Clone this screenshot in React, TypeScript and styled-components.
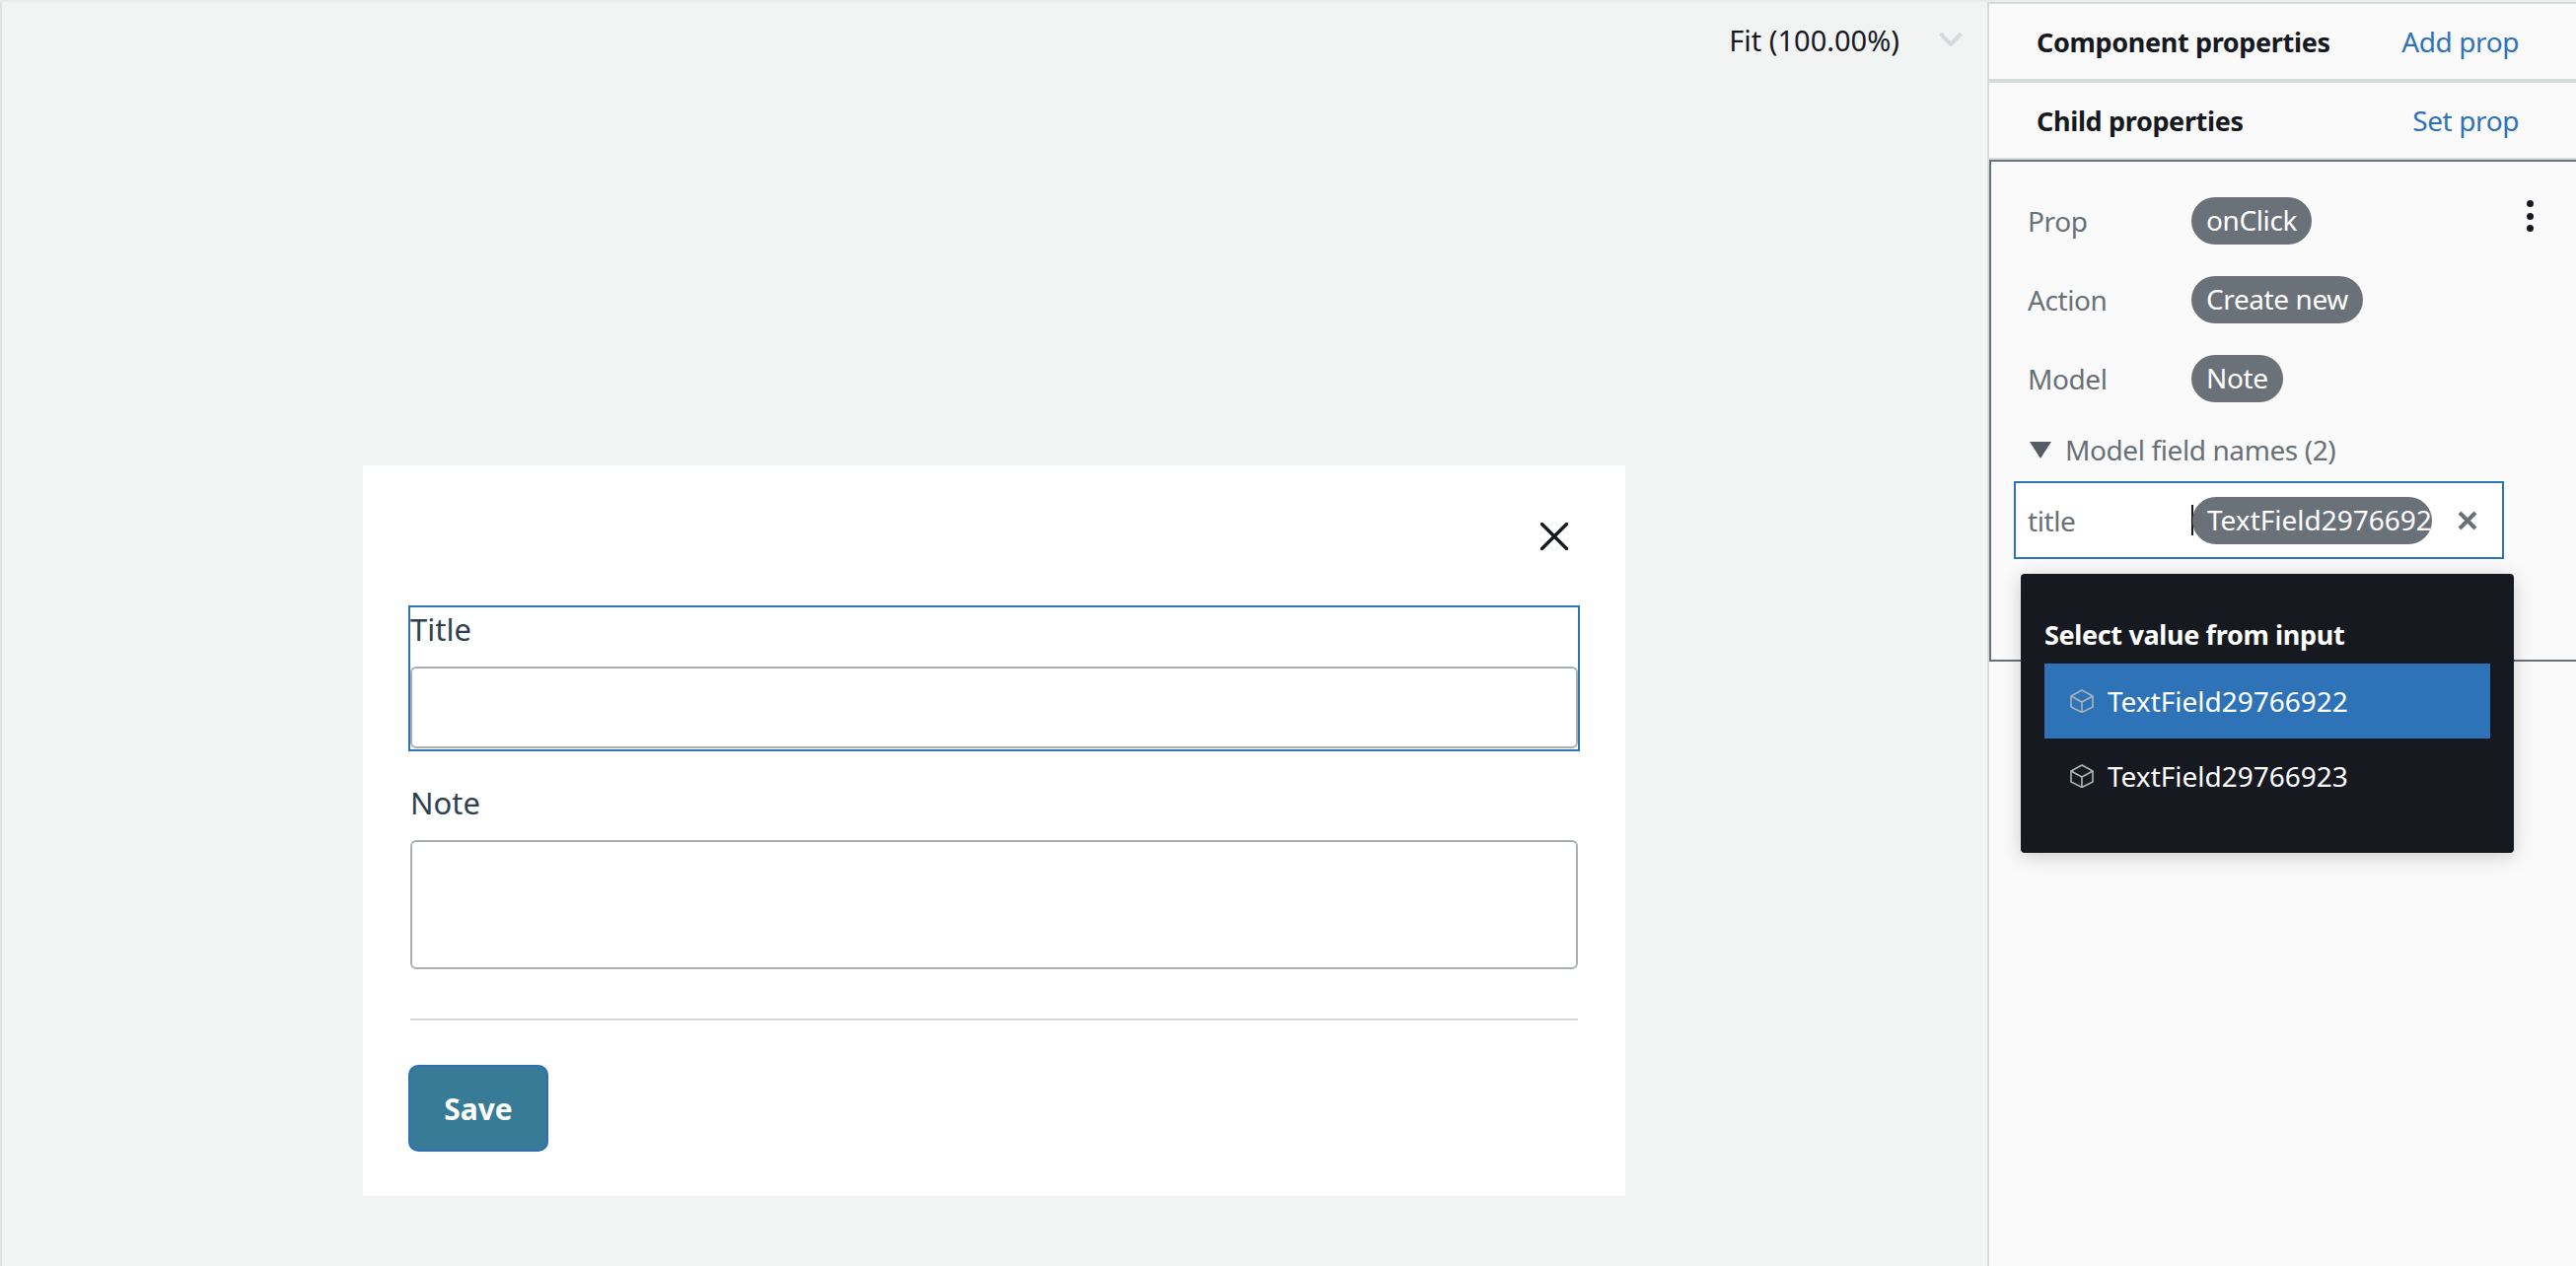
import styled, { createGlobalStyle } from "styled-components";

const FONT = `"Noto Sans", "Liberation Sans", sans-serif`;

const GlobalStyle = createGlobalStyle`
  html, body {
    margin: 0;
    padding: 0;
    height: 100%;
    background: #f2f3f3;
    font-family: ${FONT};
  }
  * {
    box-sizing: border-box;
  }
`;

const Page = styled.div`
  width: 2612px;
  height: 1284px;
  display: flex;
  overflow: hidden;
  background: #f2f3f3;
  border-top: 2px solid #e9ebed;
`;
const Canvas = styled.main`
  width: 2015px;
  flex: none;
  display: flex;
  flex-direction: column;
  align-items: center;
  border-left: 2px solid #dfe3e3;
  padding-right: 1px;
`;
const Toolbar = styled.div`
  align-self: stretch;
  height: 76px;
  display: flex;
  align-items: center;
  justify-content: flex-end;
  gap: 40px;
  padding-right: 24px;
`;
const ZoomLabel = styled.span`
  font-size: 29px;
  color: #16191f;
`;
const Card = styled.form`
  width: 1280px;
  height: 741px;
  margin-top: 394px;
  background: #ffffff;
  display: flex;
  flex-direction: column;
  padding: 58px 46px 0;
`;
const CloseRow = styled.div`
  display: flex;
  justify-content: flex-end;
  height: 84px;
  padding-right: 12px;
`;
const FieldBox = styled.div<{ $selected?: boolean }>`
  display: flex;
  flex-direction: column;
  height: ${(p) => (p.$selected ? "148px" : "auto")};
  border: 2px solid ${(p) => (p.$selected ? "#2e73b8" : "transparent")};
`;
const FieldLabel = styled.label<{ $top: number }>`
  font-size: 31px;
  line-height: 44px;
  color: #2f3e50;
  margin: ${(p) => p.$top}px 0 16px 0;
`;
const TextBox = styled.div<{ $height: number }>`
  height: ${(p) => p.$height}px;
  background: #fff;
  border: 2px solid #abb0b5;
  border-radius: 6px;
`;
const Divider = styled.hr`
  width: 1184px;
  margin: 48px 2px 45px;
  border: none;
  border-top: 2px solid #d5d9dd;
`;
const SaveButton = styled.button`
  width: 142px;
  height: 88px;
  border: 2px solid #2e6fb5;
  border-radius: 10px;
  background: #377b96;
  color: #fff;
  font-family: ${FONT};
  font-size: 30px;
  font-weight: 700;
  margin: 0;
  padding: 0;
`;
const Sidebar = styled.aside`
  flex: 1;
  background: #fafafa;
  border-left: 2px solid #d5dbdb;
  display: flex;
  flex-direction: column;
  position: relative;
`;
const Section = styled.div`
  height: 80px;
  display: flex;
  align-items: center;
  justify-content: space-between;
  padding: 0 58px 0 48px;
  border-top: 2px solid #d5dbdb;
  border-bottom: 2px solid #d5dbdb;
`;
const SectionTitle = styled.h2`
  margin: 0;
  font-size: 27px;
  font-weight: 700;
  letter-spacing: -0.35px;
  color: #16191f;
`;
const PropLink = styled.a`
  font-size: 28px;
  letter-spacing: -0.4px;
  color: #2e73b8;
`;
const Panel = styled.div`
  height: 509px;
  background: #fafafa;
  border-top: 2px solid #687078;
  border-left: 2px solid #687078;
  border-bottom: 2px solid #687078;
  padding: 36px 0 0 37px;
  position: relative;
`;
const PropRow = styled.div`
  display: flex;
  align-items: center;
  height: 48px;
  margin-bottom: 32px;
`;
const RowLabel = styled.span`
  width: 166px;
  flex: none;
  font-size: 28px;
  letter-spacing: -0.4px;
  color: #687078;
`;
const Pill = styled.span`
  display: inline-block;
  height: 48px;
  line-height: 46px;
  padding: 0 15px;
  border-radius: 24px;
  background: #6b7178;
  color: #fff;
  font-size: 28px;
  letter-spacing: -0.4px;
  white-space: nowrap;
`;
const ClippedPill = styled(Pill)`
  width: 243px;
  flex: none;
  overflow: hidden;
  padding-right: 0;
  letter-spacing: 0;
`;
const KebabButton = styled.span`
  position: absolute;
  right: 43px;
  top: 39px;
  display: flex;
  flex-direction: column;
  gap: 5.5px;
`;
const KebabDot = styled.i`
  width: 7px;
  height: 7px;
  border-radius: 50%;
  background: #16191f;
`;
const Disclosure = styled.div`
  display: flex;
  align-items: center;
  gap: 14px;
  margin-top: -2px;
  font-size: 28px;
  letter-spacing: -0.4px;
  line-height: 36px;
  color: #687078;
`;
const Triangle = styled.i`
  width: 0;
  height: 0;
  margin-left: 2px;
  border-left: 11px solid transparent;
  border-right: 11px solid transparent;
  border-top: 17px solid #545b64;
`;
const FieldRow = styled.div`
  width: 497px;
  height: 79px;
  margin: 14px 0 0 -14px;
  display: flex;
  align-items: center;
  background: #fff;
  border: 2px solid #2e73b8;
  padding-left: 12px;
`;
const Caret = styled.i`
  width: 2px;
  height: 31px;
  margin-right: -1px;
  background: #16191f;
  flex: none;
`;
const ClearIcon = styled.svg`
  width: 20px;
  height: 20px;
  margin-left: 26px;
  flex: none;
`;
const Dropdown = styled.div`
  position: absolute;
  left: 32px;
  top: 580px;
  width: 500px;
  height: 283px;
  background: #16191f;
  border-radius: 4px;
  box-shadow: 0 4px 20px rgba(0, 0, 0, 0.18);
  padding: 44px 24px 0;
  color: #fff;
  z-index: 2;
`;
const DropdownTitle = styled.div`
  font-size: 27px;
  font-weight: 700;
  letter-spacing: -0.35px;
  line-height: 36px;
  margin-bottom: 11px;
`;
const Option = styled.div<{ $active?: boolean }>`
  height: 76px;
  display: flex;
  align-items: center;
  gap: 14px;
  padding-left: 26px;
  font-size: 28px;
  background: ${(p) => (p.$active ? "#2e73b8" : "transparent")};
`;

const CubeIcon = ({ color }: { color: string }) => (
  <svg width="24" height="24" viewBox="0 0 24 24" fill="none" stroke={color} strokeWidth="1.6">
    <path d="M12 1 L23 7 V18 L12 23.5 L1 18 V7 Z" />
    <path d="M1 7 L12 13 L23 7 M12 13 V23.5" />
  </svg>
);

const App = () => {
  return (
    <Page>
      <GlobalStyle />
      <Canvas>
        <Toolbar>
          <ZoomLabel>Fit (100.00%)</ZoomLabel>
          <svg width="24" height="14" viewBox="0 0 24 14" fill="none" stroke="#d5dbdb" strokeWidth="4">
            <path d="M1.5 1 L12 12 L22.5 1" />
          </svg>
        </Toolbar>
        <Card>
          <CloseRow>
            <svg width="28" height="28" viewBox="0 0 28 28" stroke="#16191f" strokeWidth="3.4" strokeLinecap="round">
              <path d="M1.5 1.5 L26.5 26.5 M26.5 1.5 L1.5 26.5" />
            </svg>
          </CloseRow>
          <FieldBox $selected>
            <FieldLabel $top={0}>Title</FieldLabel>
            <TextBox $height={83} />
          </FieldBox>
          <FieldBox>
            <FieldLabel $top={28}>Note</FieldLabel>
            <TextBox $height={131} />
          </FieldBox>
          <Divider />
          <SaveButton type="button">Save</SaveButton>
        </Card>
      </Canvas>
      <Sidebar>
        <Section>
          <SectionTitle>Component properties</SectionTitle>
          <PropLink>Add prop</PropLink>
        </Section>
        <Section>
          <SectionTitle>Child properties</SectionTitle>
          <PropLink>Set prop</PropLink>
        </Section>
        <Panel>
          <KebabButton>
            <KebabDot />
            <KebabDot />
            <KebabDot />
          </KebabButton>
          <PropRow>
            <RowLabel>Prop</RowLabel>
            <Pill>onClick</Pill>
          </PropRow>
          <PropRow>
            <RowLabel>Action</RowLabel>
            <Pill>Create new</Pill>
          </PropRow>
          <PropRow>
            <RowLabel>Model</RowLabel>
            <Pill>Note</Pill>
          </PropRow>
          <Disclosure>
            <Triangle />
            Model field names (2)
          </Disclosure>
          <FieldRow>
            <RowLabel>title</RowLabel>
            <Caret />
            <ClippedPill>TextField29766922</ClippedPill>
            <ClearIcon viewBox="0 0 20 20" stroke="#687078" strokeWidth="4">
              <path d="M2 2 L18 18 M18 2 L2 18" />
            </ClearIcon>
          </FieldRow>
        </Panel>
        <Dropdown>
          <DropdownTitle>Select value from input</DropdownTitle>
          <Option $active>
            <CubeIcon color="#a9b4b8" />
            TextField29766922
          </Option>
          <Option>
            <CubeIcon color="#aab7b8" />
            TextField29766923
          </Option>
        </Dropdown>
      </Sidebar>
    </Page>
  );
};

export default App;
